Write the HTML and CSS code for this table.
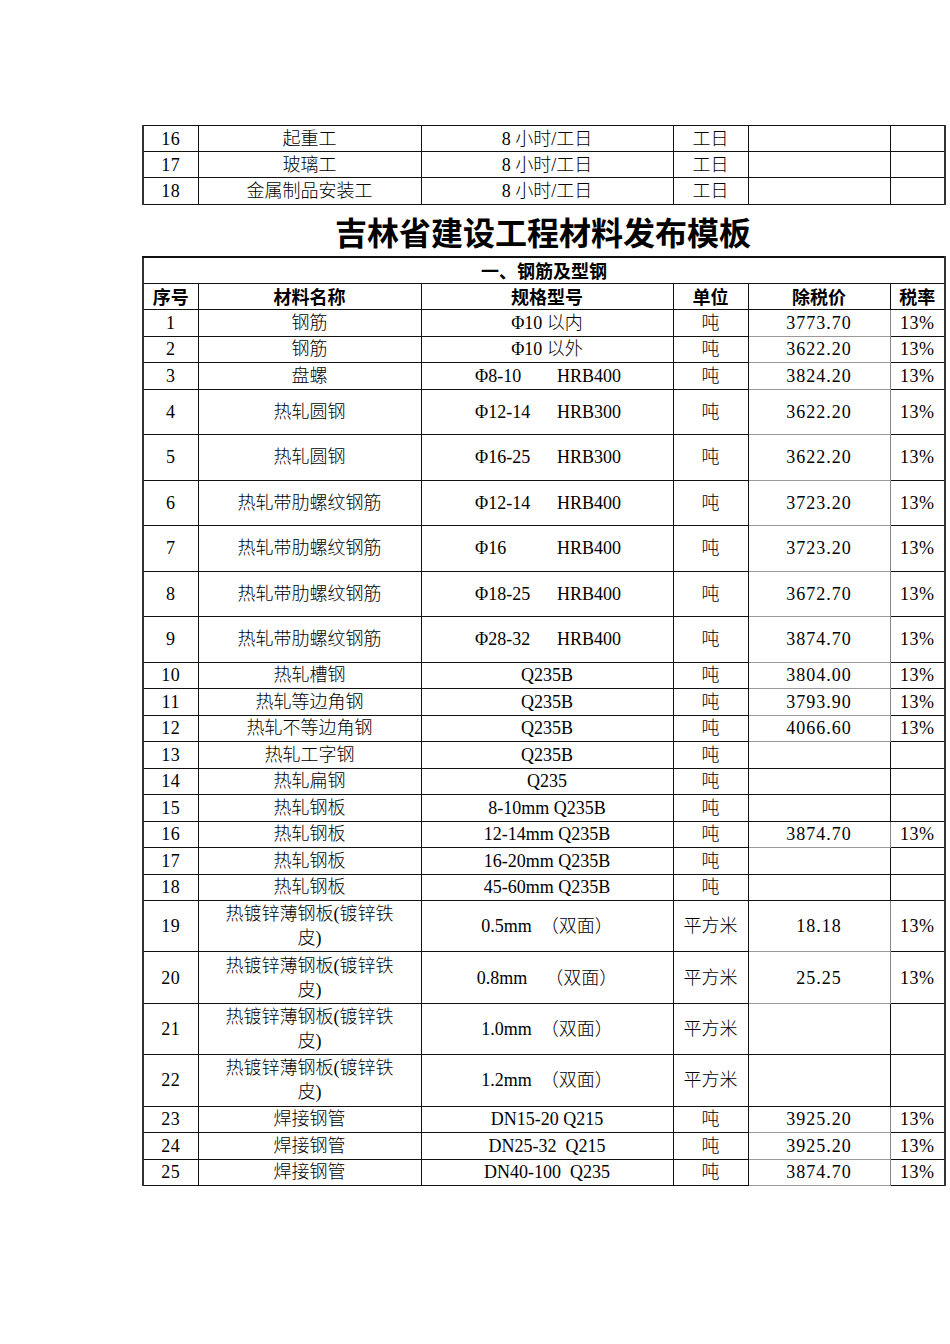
FILE: index.html
```html
<!DOCTYPE html>
<html lang="zh-CN">
<head>
<meta charset="utf-8">
<title>吉林省建设工程材料发布模板</title>
<link rel="stylesheet" href="styles.css">
</head>
<body>
<div class="page">
  <table class="grid top">
    <colgroup><col class="c1"><col class="c2"><col class="c3"><col class="c4"><col class="c5"><col class="c6"></colgroup>
    <tr class="s"><td class="num">16</td><td>起重工</td><td>8 小时/工日</td><td>工日</td><td></td><td></td></tr>
    <tr class="s"><td class="num">17</td><td>玻璃工</td><td>8 小时/工日</td><td>工日</td><td></td><td></td></tr>
    <tr class="s"><td class="num">18</td><td>金属制品安装工</td><td>8 小时/工日</td><td>工日</td><td></td><td></td></tr>
  </table>

  <h1 class="title">吉林省建设工程材料发布模板</h1>

  <table class="grid main">
    <colgroup><col class="c1"><col class="c2"><col class="c3"><col class="c4"><col class="c5"><col class="c6"></colgroup>
    <tr class="r"><td colspan="6" class="hd">一、钢筋及型钢</td></tr>
    <tr class="r hdrow"><td>序号</td><td>材料名称</td><td>规格型号</td><td>单位</td><td>除税价</td><td>税率</td></tr>
    <tr class="r"><td class="num">1</td><td>钢筋</td><td>Φ10 以内</td><td>吨</td><td class="pv">3773.70</td><td class="num">13%</td></tr>
    <tr class="r"><td class="num">2</td><td>钢筋</td><td>Φ10 以外</td><td>吨</td><td class="pv">3622.20</td><td class="num">13%</td></tr>
    <tr class="r"><td class="num">3</td><td>盘螺</td><td><span class="sa">Φ8-10</span><span class="sb">HRB400</span></td><td>吨</td><td class="pv">3824.20</td><td class="num">13%</td></tr>
    <tr class="t"><td class="num">4</td><td>热轧圆钢</td><td><span class="sa">Φ12-14</span><span class="sb">HRB300</span></td><td>吨</td><td class="pv">3622.20</td><td class="num">13%</td></tr>
    <tr class="t"><td class="num">5</td><td>热轧圆钢</td><td><span class="sa">Φ16-25</span><span class="sb">HRB300</span></td><td>吨</td><td class="pv">3622.20</td><td class="num">13%</td></tr>
    <tr class="t"><td class="num">6</td><td>热轧带肋螺纹钢筋</td><td><span class="sa">Φ12-14</span><span class="sb">HRB400</span></td><td>吨</td><td class="pv">3723.20</td><td class="num">13%</td></tr>
    <tr class="t"><td class="num">7</td><td>热轧带肋螺纹钢筋</td><td><span class="sa">Φ16</span><span class="sb">HRB400</span></td><td>吨</td><td class="pv">3723.20</td><td class="num">13%</td></tr>
    <tr class="t"><td class="num">8</td><td>热轧带肋螺纹钢筋</td><td><span class="sa">Φ18-25</span><span class="sb">HRB400</span></td><td>吨</td><td class="pv">3672.70</td><td class="num">13%</td></tr>
    <tr class="t"><td class="num">9</td><td>热轧带肋螺纹钢筋</td><td><span class="sa">Φ28-32</span><span class="sb">HRB400</span></td><td>吨</td><td class="pv">3874.70</td><td class="num">13%</td></tr>
    <tr class="r"><td class="num">10</td><td>热轧槽钢</td><td>Q235B</td><td>吨</td><td class="pv">3804.00</td><td class="num">13%</td></tr>
    <tr class="r"><td class="num">11</td><td>热轧等边角钢</td><td>Q235B</td><td>吨</td><td class="pv">3793.90</td><td class="num">13%</td></tr>
    <tr class="r"><td class="num">12</td><td>热轧不等边角钢</td><td>Q235B</td><td>吨</td><td class="pv">4066.60</td><td class="num">13%</td></tr>
    <tr class="r"><td class="num">13</td><td>热轧工字钢</td><td>Q235B</td><td>吨</td><td></td><td></td></tr>
    <tr class="r"><td class="num">14</td><td>热轧扁钢</td><td>Q235</td><td>吨</td><td></td><td></td></tr>
    <tr class="r"><td class="num">15</td><td>热轧钢板</td><td>8-10mm Q235B</td><td>吨</td><td></td><td></td></tr>
    <tr class="r"><td class="num">16</td><td>热轧钢板</td><td>12-14mm Q235B</td><td>吨</td><td class="pv">3874.70</td><td class="num">13%</td></tr>
    <tr class="r"><td class="num">17</td><td>热轧钢板</td><td>16-20mm Q235B</td><td>吨</td><td></td><td></td></tr>
    <tr class="r"><td class="num">18</td><td>热轧钢板</td><td>45-60mm Q235B</td><td>吨</td><td></td><td></td></tr>
    <tr class="w"><td class="num">19</td><td class="wrap">热镀锌薄钢板(镀锌铁<br>皮)</td><td class="pre">0.5mm  （双面）</td><td>平方米</td><td class="pv">18.18</td><td class="num">13%</td></tr>
    <tr class="w"><td class="num">20</td><td class="wrap">热镀锌薄钢板(镀锌铁<br>皮)</td><td class="pre">0.8mm    （双面）</td><td>平方米</td><td class="pv">25.25</td><td class="num">13%</td></tr>
    <tr class="w"><td class="num">21</td><td class="wrap">热镀锌薄钢板(镀锌铁<br>皮)</td><td class="pre">1.0mm  （双面）</td><td>平方米</td><td></td><td></td></tr>
    <tr class="w"><td class="num">22</td><td class="wrap">热镀锌薄钢板(镀锌铁<br>皮)</td><td class="pre">1.2mm  （双面）</td><td>平方米</td><td></td><td></td></tr>
    <tr class="r"><td class="num">23</td><td>焊接钢管</td><td class="pre">DN15-20 Q215</td><td>吨</td><td class="pv">3925.20</td><td class="num">13%</td></tr>
    <tr class="r"><td class="num">24</td><td>焊接钢管</td><td class="pre">DN25-32  Q215</td><td>吨</td><td class="pv">3925.20</td><td class="num">13%</td></tr>
    <tr class="r"><td class="num">25</td><td>焊接钢管</td><td class="pre">DN40-100  Q235</td><td>吨</td><td class="pv">3874.70</td><td class="num">13%</td></tr>
  </table>
</div>
</body>
</html>
```

FILE: styles.css
```css
html, body {
  margin: 0;
  padding: 0;
  background: #fff;
}

.page {
  padding: 125px 0 0 142px;
  width: 802px;
  font-family: "Liberation Serif", "Noto Sans CJK SC", serif;
  font-weight: 300;
  font-size: 18px;
  color: #000;
}

.grid {
  border-collapse: collapse;
  table-layout: fixed;
  width: 802px;
}

.c1 { width: 55px; }
.c2 { width: 223px; }
.c3 { width: 252px; }
.c4 { width: 75px; }
.c5 { width: 142px; }
.c6 { width: 55px; }

.grid td {
  border: 1px solid #111;
  padding: 0;
  text-align: center;
  vertical-align: middle;
  line-height: 24px;
  white-space: nowrap;
  overflow: hidden;
}

.grid tr > td:first-child {
  border-left: 2px solid #333;
}

.grid tr > td:last-child {
  border-right: 2px solid #333;
}

.grid tr.s { height: 26.2px; }
.grid tr.r { height: 26.5px; }
.grid tr.t { height: 45.5px; }
.grid tr.w { height: 51.4px; }

.title {
  margin: 0;
  height: 51px;
  line-height: 53px;
  text-align: center;
  font-family: "Noto Sans CJK SC", sans-serif;
  font-weight: 700;
  font-size: 32px;
  color: #000;
}

.grid td.hd,
.grid .hdrow td {
  font-family: "Noto Sans CJK SC", sans-serif;
  font-weight: 700;
  font-size: 18px;
}

.grid td.hd {
  border-top: 2px solid #111;
}

.grid td.num {
  letter-spacing: 0.5px;
}

.grid td.pv {
  letter-spacing: 1px;
  border-top-color: #999;
  border-bottom-color: #999;
  border-right-color: #888;
}

.sa {
  display: inline-block;
  width: 82px;
  text-align: left;
}

.sb {
  display: inline-block;
  width: 62px;
  text-align: left;
}

.grid td.pre {
  white-space: pre;
}

.grid td.wrap {
  white-space: normal;
  line-height: 24px;
}
```
